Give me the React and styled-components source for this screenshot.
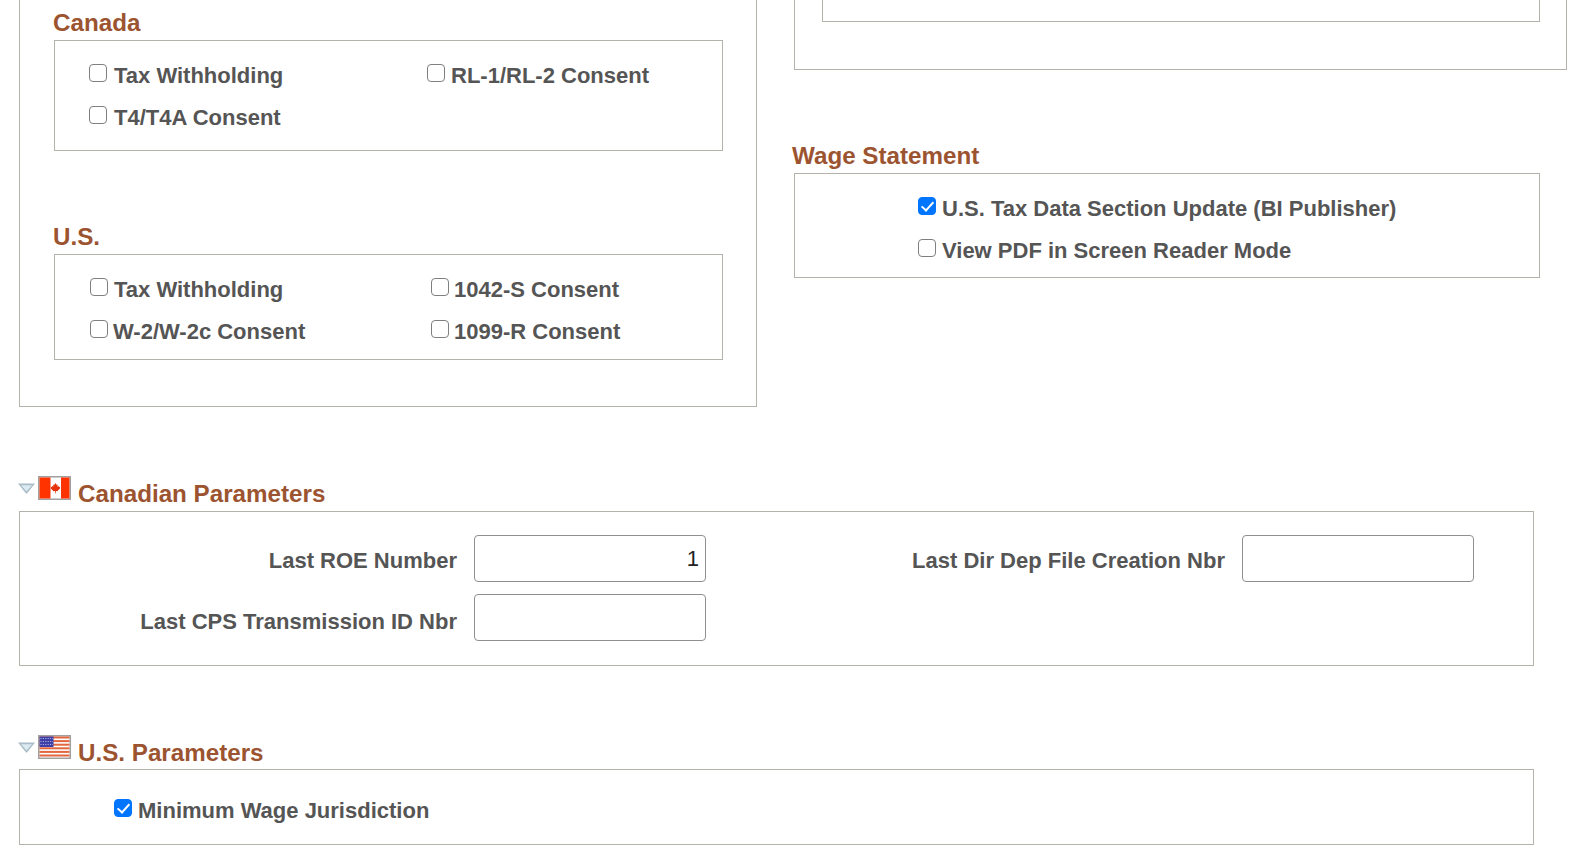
import React from 'react';
import styled, { createGlobalStyle } from 'styled-components';

const Global = createGlobalStyle`
  html, body { margin: 0; padding: 0; background: #fff; }
  body { font-family: "Liberation Sans", Arial, sans-serif; color: #555; overflow: hidden; }
`;

const Page = styled.div`
  width: 1593px;
  height: 865px;
  padding-left: 19px;
  box-sizing: border-box;
  overflow: hidden;
`;

const TopRow = styled.div`
  display: flex;
  align-items: flex-start;
  gap: 37px;
  height: 476px;
`;

const LeftPanel = styled.div`
  width: 738px;
  height: 407px;
  flex: none;
  box-sizing: border-box;
  border: 1px solid #b5b2ab;
  border-top: 0;
  padding: 10px 0 0 34px;
`;

const RightColumn = styled.div`
  width: 773px;
  flex: none;
  display: flex;
  flex-direction: column;
`;

const RightPanel = styled.div`
  width: 773px;
  height: 70px;
  box-sizing: border-box;
  border: 1px solid #b5b2ab;
  border-top: 0;
  padding-left: 27px;
  margin-bottom: 73px;
`;

const InnerStub = styled.div`
  width: 718px;
  height: 22px;
  box-sizing: border-box;
  border: 1px solid #b5b2ab;
  border-top: 0;
`;

const GroupTitle = styled.div`
  font-size: 24.2px;
  font-weight: 700;
  line-height: 25px;
  color: #9c5430;
  margin-left: ${p => p.$indent}px;
  height: 30px;
`;

const Box = styled.div`
  box-sizing: border-box;
  border: 1px solid #b5b2ab;
  width: ${p => p.$w}px;
  height: ${p => p.$h}px;
  padding: ${p => p.$pad};
`;

const CheckGrid = styled.div`
  display: grid;
  grid-template-columns: ${p => p.$cols};
  row-gap: 12px;
`;

const CheckItem = styled.label`
  display: flex;
  align-items: flex-start;
  height: 30px;
  font-size: 22px;
  font-weight: 700;
  line-height: 23px;
  color: #555;
  white-space: nowrap;
`;

const Check = styled.input.attrs({ type: 'checkbox' })`
  appearance: none;
  position: relative;
  box-sizing: border-box;
  width: 18px;
  height: 18px;
  margin: 0 ${p => p.$gap}px 0 0;
  flex: none;
  background: #fff;
  border: 1.5px solid #7f7f7f;
  border-radius: 4px;

  &:checked {
    background: #0075ff;
    border-color: #0075ff;
  }

  &:checked::after {
    content: "";
    position: absolute;
    left: 4.5px;
    top: 0.5px;
    width: 5px;
    height: 10px;
    border: solid #fff;
    border-width: 0 2.5px 2.5px 0;
    transform: rotate(42deg);
  }
`;

const Spacer = styled.div`
  height: ${p => p.$h}px;
`;

const SectionHead = styled.div`
  display: flex;
  align-items: flex-start;
  height: ${p => p.$h}px;
  margin-left: -1px;
`;

const Twisty = styled.svg`
  width: 17px;
  height: 11px;
  margin: 7px 3px 0 0;
  flex: none;
`;

const Flag = styled.svg`
  width: 33px;
  height: 24px;
  flex: none;
  margin-right: 7px;
`;

const SectionTitle = styled.div`
  font-size: 24.2px;
  font-weight: 700;
  line-height: 27px;
  color: #9c5430;
  margin-top: 4px;
`;

const ParamGrid = styled.div`
  display: grid;
  grid-template-columns: 454px 232px 200px 336px 232px;
  grid-auto-rows: 47px;
  row-gap: 12px;
  align-items: center;
`;

const FieldLabel = styled.div`
  grid-column: ${p => p.$col};
  font-size: 22px;
  font-weight: 700;
  color: #555;
  text-align: right;
  padding-right: 17px;
  white-space: nowrap;
  padding-top: ${p => p.$top}px;
`;

const Field = styled.input`
  grid-column: ${p => p.$col};
  width: 100%;
  height: 47px;
  box-sizing: border-box;
  border: 1px solid #8f8f8f;
  border-radius: 4px;
  background: #fff;
  font-family: "Liberation Sans", Arial, sans-serif;
  font-size: 22px;
  color: #222;
  text-align: right;
  padding: 0 6px;
  outline: none;
`;

const Twist = () => (
  <Twisty viewBox="0 0 17 11">
    <path d="M0 0.5H17L9 10.5H8Z" fill="#a9bcc8" />
    <path d="M3 2.2H14L8.5 8.5Z" fill="#dcebf2" />
  </Twisty>
);

const CanadaFlag = () => (
  <Flag viewBox="0 0 33 24">
    <rect x="0.75" y="0.75" width="31.5" height="22.5" fill="#fff" stroke="#a0a0a0" strokeWidth="1.5" />
    <rect x="1.5" y="1.5" width="11" height="21" fill="#ff3300" />
    <rect x="23" y="1.5" width="8.5" height="21" fill="#ff3300" />
    <path d="M17.7 7l1 1.9 1-.4-.3 2.3 1.2-.8.5 1 1-.2-.4 1.4.5.4-2.4 1.8-.1.9-1.9-.3-.1 2.6h-.6l-.1-2.6-1.9.3-.1-.9-2.4-1.8.5-.4-.4-1.4 1 .2.5-1 1.2.8-.3-2.3 1 .4z" fill="#e8320a" />
  </Flag>
);

const USFlag = () => (
  <Flag viewBox="0 0 33 24">
    <rect x="0.75" y="0.75" width="31.5" height="22.5" fill="#fff" stroke="#a0a0a0" strokeWidth="1.5" />
    {[1.5, 5.1, 8.7, 12.3, 15.9, 19.5].map(y => (
      <rect key={y} x="1.5" y={y} width="30" height="2" fill="#e2673f" />
    ))}
    <rect x="1.5" y="1.5" width="14" height="10.5" fill="#3f3fa8" />
    {[3.5, 6.5, 9.5].map(y => (
      <path key={y} d={`M2.5 ${y}H15`} stroke="#b9bbe6" strokeWidth="1" strokeDasharray="1 1.4" />
    ))}
  </Flag>
);

export default function App() {
  return (
    <Page>
      <Global />
      <TopRow>
        <LeftPanel>
          <GroupTitle $indent={-1}>Canada</GroupTitle>
          <Box $w={669} $h={111} $pad="23px 0 0 34px">
            <CheckGrid $cols="338px 1fr">
              <CheckItem><Check $gap={7} />Tax Withholding</CheckItem>
              <CheckItem><Check $gap={6} />RL-1/RL-2 Consent</CheckItem>
              <CheckItem><Check $gap={7} />T4/T4A Consent</CheckItem>
            </CheckGrid>
          </Box>
          <Spacer $h={73} />
          <GroupTitle $indent={-1}>U.S.</GroupTitle>
          <Box $w={669} $h={106} $pad="23px 0 0 34.5px">
            <CheckGrid $cols="341.5px 1fr">
              <CheckItem><Check $gap={6.5} />Tax Withholding</CheckItem>
              <CheckItem><Check $gap={5} />1042-S Consent</CheckItem>
              <CheckItem><Check $gap={5.5} />W-2/W-2c Consent</CheckItem>
              <CheckItem><Check $gap={5} />1099-R Consent</CheckItem>
            </CheckGrid>
          </Box>
        </LeftPanel>
        <RightColumn>
          <RightPanel><InnerStub /></RightPanel>
          <GroupTitle $indent={-2}>Wage Statement</GroupTitle>
          <Box $w={746} $h={105} $pad="23px 0 0 123px">
            <CheckGrid $cols="1fr">
              <CheckItem><Check $gap={6} defaultChecked />U.S. Tax Data Section Update (BI Publisher)</CheckItem>
              <CheckItem><Check $gap={6} />View PDF in Screen Reader Mode</CheckItem>
            </CheckGrid>
          </Box>
        </RightColumn>
      </TopRow>

      <SectionHead $h={35}>
        <Twist />
        <CanadaFlag />
        <SectionTitle>Canadian Parameters</SectionTitle>
      </SectionHead>
      <Box $w={1515} $h={155} $pad="23px 0 0 0">
        <ParamGrid>
          <FieldLabel $col={1} $top={4}>Last ROE Number</FieldLabel>
          <Field $col={2} defaultValue="1" />
          <FieldLabel $col={4} $top={4}>Last Dir Dep File Creation Nbr</FieldLabel>
          <Field $col={5} />
          <FieldLabel $col={1} $top={9}>Last CPS Transmission ID Nbr</FieldLabel>
          <Field $col={2} />
        </ParamGrid>
      </Box>
      <Spacer $h={69} />
      <SectionHead $h={34}>
        <Twist />
        <USFlag />
        <SectionTitle>U.S. Parameters</SectionTitle>
      </SectionHead>
      <Box $w={1515} $h={76} $pad="29px 0 0 94px">
        <CheckItem><Check $gap={6} defaultChecked />Minimum Wage Jurisdiction</CheckItem>
      </Box>
    </Page>
  );
}
